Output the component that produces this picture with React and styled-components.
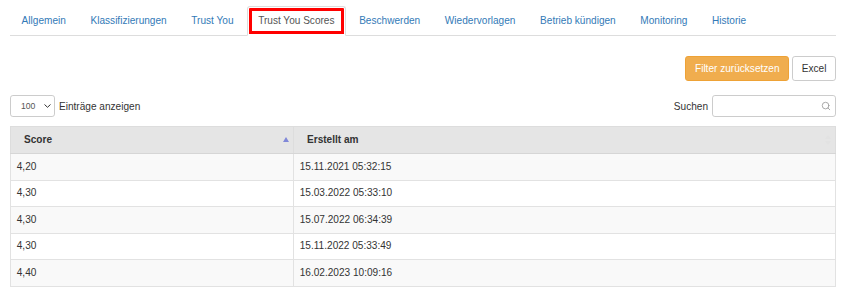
import React from "react";
import styled, { createGlobalStyle } from "styled-components";
import { Search } from "lucide-react";

const GlobalStyle = createGlobalStyle`
  html, body { margin: 0; padding: 0; background: #fff; }
  body {
    font-family: "Liberation Sans", Arial, Helvetica, sans-serif;
    font-size: 10.08px;
    color: #333;
  }
  * { box-sizing: border-box; }
`;

const Page = styled.div`
  padding: 6px 10px 0;
`;

const TabList = styled.ul`
  display: flex;
  list-style: none;
  margin: 0;
  padding: 0;
  border-bottom: 1px solid #ddd;
`;

const TabItem = styled.li`
  margin: 0 1.44px -1px 0;
`;

const TabLink = styled.a`
  display: block;
  padding: 7px 10.6px;
  line-height: 14.4px;
  font-size: 10.08px;
  text-decoration: none;
  border: 1px solid ${(p) => (p.$active ? "#ddd" : "transparent")};
  border-bottom-color: ${(p) => (p.$active ? "#fff" : "transparent")};
  border-radius: 3px 3px 0 0;
  background: ${(p) => (p.$active ? "#fff" : "transparent")};
  color: ${(p) => (p.$active ? "#555" : "#337ab7")};
  outline: ${(p) => (p.$active ? "3px solid #f00" : "none")};
  outline-offset: -5px;
  cursor: pointer;
`;

const Toolbar = styled.div`
  display: flex;
  justify-content: flex-end;
  gap: 3px;
  margin-top: 20px;
`;

const Button = styled.button`
  font-family: inherit;
  font-size: 10.08px;
  line-height: 14.4px;
  padding: 4.3px 8.6px;
  border: 1px solid ${(p) => (p.$variant === "warning" ? "#eea236" : "#ccc")};
  border-radius: 2.9px;
  background: ${(p) => (p.$variant === "warning" ? "#f0ad4e" : "#fff")};
  color: ${(p) => (p.$variant === "warning" ? "#fff" : "#333")};
  cursor: pointer;
`;

const Controls = styled.div`
  display: flex;
  justify-content: space-between;
  align-items: center;
  margin-top: 14px;
`;

const Label = styled.label`
  display: flex;
  align-items: center;
  gap: 4px;
  font-size: 10.08px;
  color: #333;
`;

const FieldWrap = styled.span`
  position: relative;
  display: inline-flex;
`;

const Select = styled.select`
  appearance: none;
  -webkit-appearance: none;
  width: 45px;
  height: 21.6px;
  padding: 0 0 0 10px;
  font-family: inherit;
  font-size: 8.64px;
  color: #555;
  background: #fff;
  border: 1px solid #ccc;
  border-radius: 2.9px;
`;

const Chevron = styled.svg`
  position: absolute;
  right: 4px;
  top: 9px;
  pointer-events: none;
`;

const SearchInput = styled.input`
  width: 124px;
  height: 21.6px;
  padding: 0 18px 0 6px;
  font-family: inherit;
  font-size: 10px;
  border: 1px solid #ccc;
  border-radius: 2.9px;
  background: #fff;
`;

const SearchIcon = styled(Search)`
  position: absolute;
  right: 5px;
  top: 6px;
  pointer-events: none;
`;

const Table = styled.table`
  width: 100%;
  margin-top: 8.5px;
  border-collapse: collapse;
  border: 1px solid #ddd;
  font-size: 10.08px;
`;

const Th = styled.th`
  width: ${(p) => p.$width || "auto"};
  padding: 6px 4px 6px 13px;
  line-height: 14.4px;
  text-align: left;
  font-weight: bold;
  color: #333;
  background: #e5e5e5;
  border: 1px solid #ddd;
  border-bottom-color: #d6d6d6;
`;

const HeadInner = styled.div`
  display: flex;
  align-items: center;
  justify-content: space-between;
`;

const Row = styled.tr`
  background: ${(p) => (p.$striped ? "#f9f9f9" : "#fff")};
`;

const Td = styled.td`
  padding: 5.6px 5.76px;
  line-height: 14.4px;
  color: #333;
  border: 1px solid #e2e2e2;
`;

const tabs = [
  "Allgemein",
  "Klassifizierungen",
  "Trust You",
  "Trust You Scores",
  "Beschwerden",
  "Wiedervorlagen",
  "Betrieb kündigen",
  "Monitoring",
  "Historie",
];

const rows = [
  ["4,20", "15.11.2021 05:32:15"],
  ["4,30", "15.03.2022 05:33:10"],
  ["4,30", "15.07.2022 06:34:39"],
  ["4,30", "15.11.2022 05:33:49"],
  ["4,40", "16.02.2023 10:09:16"],
];

const SortAsc = () => (
  <svg width="6" height="5" viewBox="0 0 6 5">
    <path d="M3 0 L6 5 L0 5 Z" fill="#8088d8" />
  </svg>
);

const SortBoth = () => (
  <svg width="6" height="10" viewBox="0 0 6 10">
    <path d="M3 0 L6 4 L0 4 Z" fill="#e2e2e2" />
    <path d="M3 10 L6 6 L0 6 Z" fill="#e2e2e2" />
  </svg>
);

export default function App() {
  return (
    <Page>
      <GlobalStyle />
      <TabList>
        {tabs.map((t) => (
          <TabItem key={t}>
            <TabLink $active={t === "Trust You Scores"}>{t}</TabLink>
          </TabItem>
        ))}
      </TabList>

      <Toolbar>
        <Button $variant="warning">Filter zurücksetzen</Button>
        <Button>Excel</Button>
      </Toolbar>

      <Controls>
        <Label>
          <FieldWrap>
            <Select defaultValue="100">
              <option value="10">10</option>
              <option value="25">25</option>
              <option value="50">50</option>
              <option value="100">100</option>
            </Select>
            <Chevron width="7" height="4" viewBox="0 0 7 4">
              <path d="M0.5 0.5 L3.5 3.3 L6.5 0.5" fill="none" stroke="#333" strokeWidth="1" />
            </Chevron>
          </FieldWrap>
          Einträge anzeigen
        </Label>
        <Label>
          Suchen
          <FieldWrap>
            <SearchInput type="text" />
            <SearchIcon size={10} color="#999" strokeWidth={2} />
          </FieldWrap>
        </Label>
      </Controls>

      <Table>
        <thead>
          <tr>
            <Th $width="283px">
              <HeadInner>
                Score
                <SortAsc />
              </HeadInner>
            </Th>
            <Th>
              <HeadInner>
                Erstellt am
                <SortBoth />
              </HeadInner>
            </Th>
          </tr>
        </thead>
        <tbody>
          {rows.map((r, i) => (
            <Row key={i} $striped={i % 2 === 0}>
              <Td>{r[0]}</Td>
              <Td>{r[1]}</Td>
            </Row>
          ))}
        </tbody>
      </Table>
    </Page>
  );
}
